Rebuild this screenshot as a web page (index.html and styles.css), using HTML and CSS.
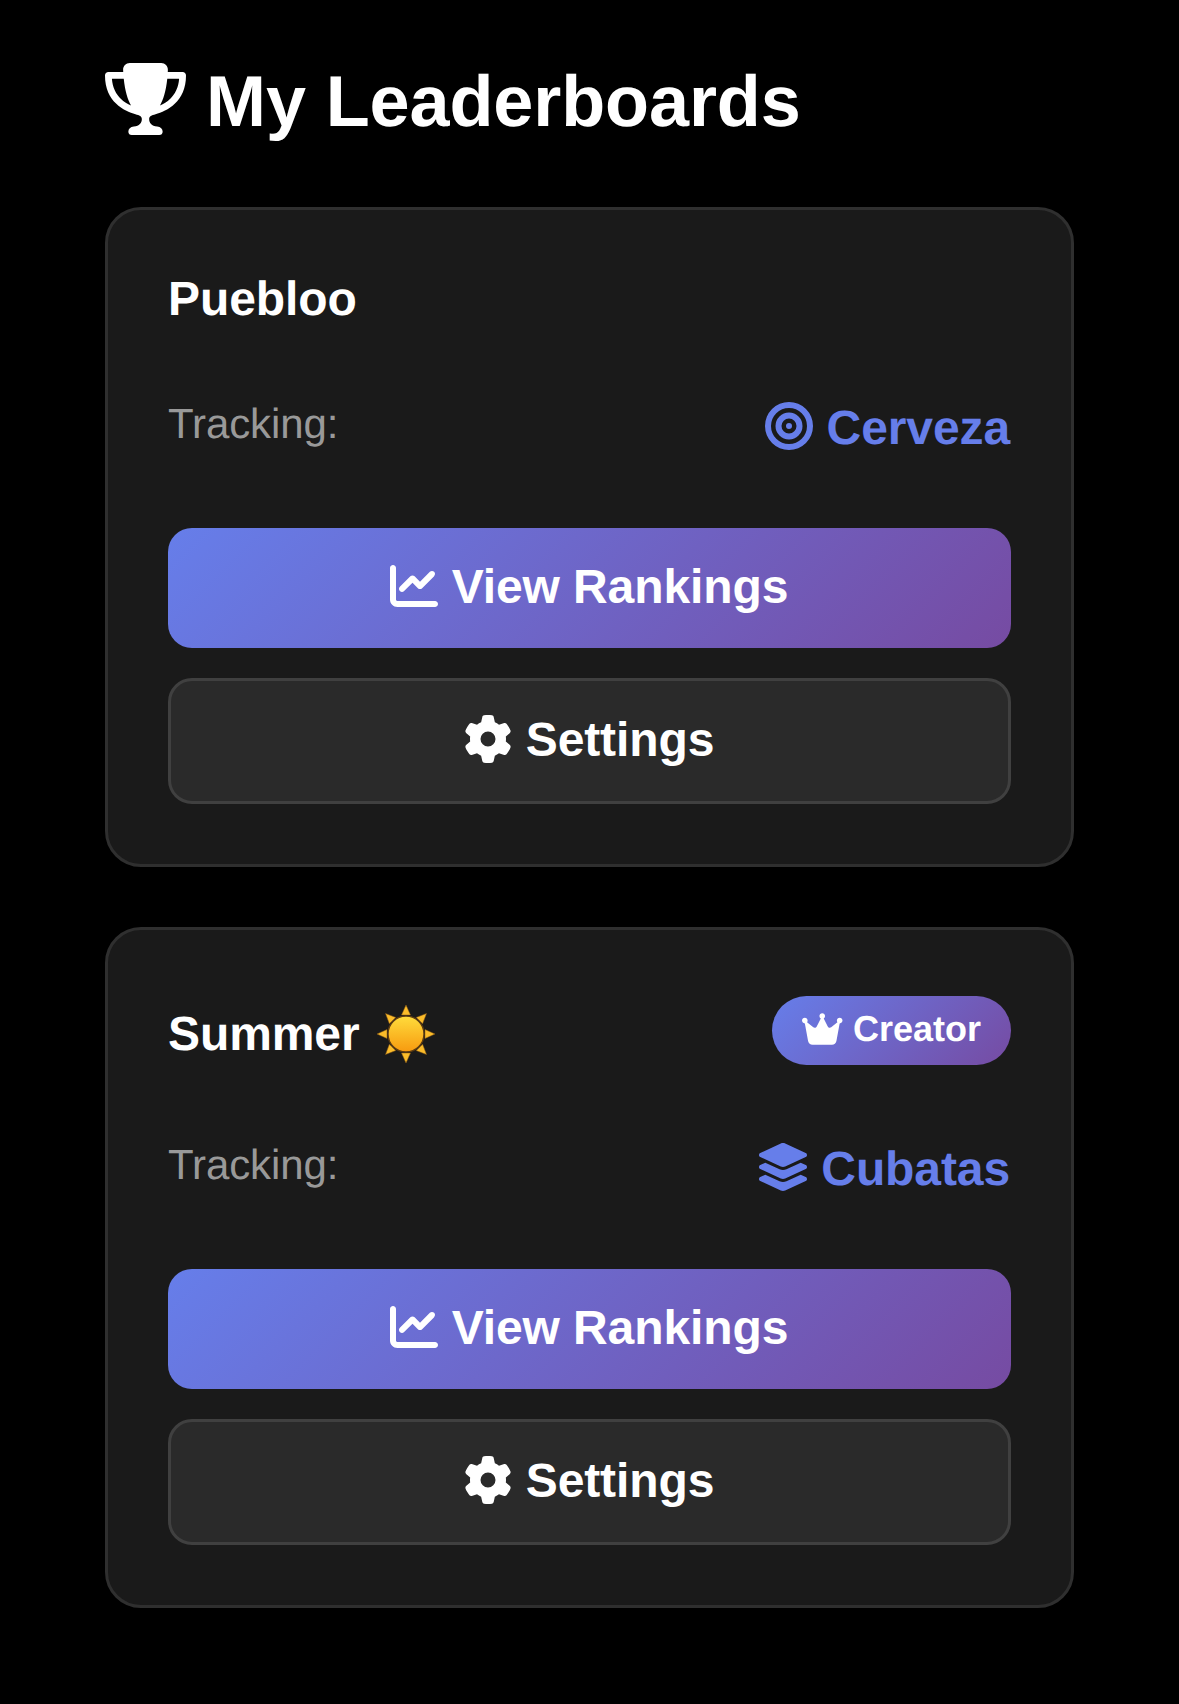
FILE: index.html
```html
<!DOCTYPE html>
<html lang="en">
<head>
    <meta charset="UTF-8">
    <meta name="viewport" content="width=device-width, initial-scale=1.0">
    <title>My Leaderboards</title>
    <link rel="stylesheet" href="styles.css">
</head>
<body>
    <h1 class="page-title">
        <svg class="trophy-icon" viewBox="0 0 576 512"><path d="M400 0H176c-26.5 0-48.1 21.8-47.1 48.2c.2 5.3 .4 10.6 .7 15.8H24C10.7 64 0 74.7 0 88c0 92.6 33.5 157 78.5 200.7c44.3 43.1 98.3 64.8 138.1 75.8C245 372 262 378 262 398C262 425 245 448 205 452C180 455 166 470 166 488C166 502 176 512 190 512H386C400 512 410 502 410 488C410 470 396 455 371 452C331 448 314 425 314 398C314 378 331 372 359.4 364.5c39.9-11 93.9-32.7 138.2-75.8C542.5 245 576 180.6 576 88c0-13.3-10.7-24-24-24H446.4c.3-5.2 .5-10.4 .7-15.8C448.1 21.8 426.5 0 400 0zM48.9 112h84.4c9.1 90.1 29.2 150.3 51.9 190.6c-24.9-11-50.8-26.5-73.2-48.3c-32-31.1-58-76-63-142.3zM464.1 254.3c-22.4 21.8-48.3 37.3-73.2 48.3c22.7-40.3 42.8-100.5 51.9-190.6h84.4c-5.1 66.3-31.1 111.2-63 142.3z"/></svg>
        <span>My Leaderboards</span>
    </h1>

    <div class="card">
        <div class="card-header">
            <h2 class="card-title">Puebloo</h2>
        </div>
        <div class="tracking-row">
            <span class="tracking-label">Tracking:</span>
            <span class="tracking-value">
                <svg class="icon" viewBox="0 0 512 512"><path d="M448 256A192 192 0 1 0 64 256a192 192 0 1 0 384 0zM0 256a256 256 0 1 1 512 0A256 256 0 1 1 0 256zm256 80a80 80 0 1 0 0-160 80 80 0 1 0 0 160zm0-224a144 144 0 1 1 0 288 144 144 0 1 1 0-288zM224 256a32 32 0 1 1 64 0 32 32 0 1 1 -64 0z"/></svg>
                Cerveza
            </span>
        </div>
        <div class="actions">
            <button class="btn btn-primary">
                <svg class="icon" viewBox="0 0 512 512"><path d="M64 64c0-17.7-14.3-32-32-32S0 46.3 0 64V400c0 44.2 35.8 80 80 80H480c17.7 0 32-14.3 32-32s-14.3-32-32-32H80c-8.8 0-16-7.2-16-16V64zm406.6 86.6c12.5-12.5 12.5-32.8 0-45.3s-32.8-12.5-45.3 0L320 210.7l-57.4-57.4c-12.5-12.5-32.8-12.5-45.3 0l-112 112c-12.5 12.5-12.5 32.8 0 45.3s32.8 12.5 45.3 0L240 221.3l57.4 57.4c12.5 12.5 32.8 12.5 45.3 0l128-128z"/></svg>
                View Rankings
            </button>
            <button class="btn btn-secondary">
                <svg class="icon" viewBox="0 0 512 512"><path d="M495.9 166.6c3.2 8.7 .5 18.4-6.4 24.6l-43.3 39.4c1.1 8.3 1.7 16.8 1.7 25.4s-.6 17.1-1.7 25.4l43.3 39.4c6.9 6.2 9.6 15.9 6.4 24.6c-4.4 11.9-9.7 23.3-15.8 34.3l-4.7 8.1c-6.6 11-14 21.4-22.1 31.2c-5.9 7.2-15.7 9.6-24.5 6.8l-55.7-17.7c-13.4 10.3-28.2 18.9-44 25.4l-12.5 57.1c-2 9.1-9 16.3-18.2 17.8c-13.8 2.3-28 3.5-42.5 3.5s-28.7-1.2-42.5-3.5c-9.2-1.5-16.2-8.7-18.2-17.8l-12.5-57.1c-15.8-6.5-30.6-15.1-44-25.4L83.1 425.9c-8.8 2.8-18.6 .3-24.5-6.8c-8.1-9.8-15.5-20.2-22.1-31.2l-4.7-8.1c-6.1-11-11.4-22.4-15.8-34.3c-3.2-8.7-.5-18.4 6.4-24.6l43.3-39.4C64.6 273.1 64 264.6 64 256s.6-17.1 1.7-25.4L22.4 191.2c-6.9-6.2-9.6-15.9-6.4-24.6c4.4-11.9 9.7-23.3 15.8-34.3l4.7-8.1c6.6-11 14-21.4 22.1-31.2c5.9-7.2 15.7-9.6 24.5-6.8l55.7 17.7c13.4-10.3 28.2-18.9 44-25.4l12.5-57.1c2-9.1 9-16.3 18.2-17.8C227.3 1.2 241.5 0 256 0s28.7 1.2 42.5 3.5c9.2 1.5 16.2 8.7 18.2 17.8l12.5 57.1c15.8 6.5 30.6 15.1 44 25.4l55.7-17.7c8.8-2.8 18.6-.3 24.5 6.8c8.1 9.8 15.5 20.2 22.1 31.2l4.7 8.1c6.1 11 11.4 22.4 15.8 34.3zM256 336a80 80 0 1 0 0-160 80 80 0 1 0 0 160z"/></svg>
                Settings
            </button>
        </div>
    </div>

    <div class="card">
        <div class="card-header card-header-creator">
            <h2 class="card-title">Summer
                <svg class="sun-icon" viewBox="0 0 58 58">
                    <defs>
                        <linearGradient id="sunFill" x1="0" y1="0" x2="0" y2="1">
                            <stop offset="0" stop-color="#ffdc3c"/>
                            <stop offset="1" stop-color="#f79a0f"/>
                        </linearGradient>
                    </defs>
                    <g fill="#fbbc2a" stroke="#8a5a14" stroke-width="0.5">
                        <polygon points="29,0 33.5,10 24.5,10"/>
                        <polygon points="29,0 33.5,10 24.5,10" transform="rotate(45 29 29)"/>
                        <polygon points="29,0 33.5,10 24.5,10" transform="rotate(90 29 29)"/>
                        <polygon points="29,0 33.5,10 24.5,10" transform="rotate(135 29 29)"/>
                        <polygon points="29,0 33.5,10 24.5,10" transform="rotate(180 29 29)"/>
                        <polygon points="29,0 33.5,10 24.5,10" transform="rotate(225 29 29)"/>
                        <polygon points="29,0 33.5,10 24.5,10" transform="rotate(270 29 29)"/>
                        <polygon points="29,0 33.5,10 24.5,10" transform="rotate(315 29 29)"/>
                    </g>
                    <circle cx="29" cy="29" r="18" fill="url(#sunFill)" stroke="#5b3b12" stroke-width="1.4"/>
                </svg>
            </h2>
            <span class="badge">
                <svg class="badge-icon" viewBox="0 0 576 512"><path d="M309 106c11.4-7 19-19.7 19-34c0-22.1-17.9-40-40-40s-40 17.9-40 40c0 14.4 7.6 27 19 34L209.7 220.6c-9.1 18.2-32.7 23.4-48.6 10.7L72 160c5-6.7 8-15 8-24c0-22.1-17.9-40-40-40S0 113.9 0 136s17.9 40 40 40c.2 0 .5 0 .7 0L86.4 427.4c5.5 30.4 32 52.6 63 52.6H426.6c30.9 0 57.4-22.1 63-52.6L535.3 176c.2 0 .5 0 .7 0c22.1 0 40-17.9 40-40s-17.9-40-40-40s-40 17.9-40 40c0 9 3 17.3 8 24l-89.1 71.3c-15.9 12.7-39.5 7.5-48.6-10.7L309 106z"/></svg>
                Creator
            </span>
        </div>
        <div class="tracking-row">
            <span class="tracking-label">Tracking:</span>
            <span class="tracking-value">
                <svg class="icon" viewBox="32 0 512 512"><path d="M264.5 5.2c14.9-6.9 32.1-6.9 47 0l218.6 101c8.5 3.9 13.9 12.4 13.9 21.8s-5.4 17.9-13.9 21.8l-218.6 101c-14.9 6.9-32.1 6.9-47 0L45.9 149.8C37.4 145.8 32 137.3 32 128s5.4-17.9 13.9-21.8L264.5 5.2zM476.9 209.6l53.2 24.6c8.5 3.9 13.9 12.4 13.9 21.8s-5.4 17.9-13.9 21.8l-218.6 101c-14.9 6.9-32.1 6.9-47 0L45.9 277.8C37.4 273.8 32 265.3 32 256s5.4-17.9 13.9-21.8l53.2-24.6 152 70.2c23.4 10.8 50.4 10.8 73.8 0l152-70.2zm-152 198.2l152-70.2 53.2 24.6c8.5 3.9 13.9 12.4 13.9 21.8s-5.4 17.9-13.9 21.8l-218.6 101c-14.9 6.9-32.1 6.9-47 0L45.9 405.8C37.4 401.8 32 393.3 32 384s5.4-17.9 13.9-21.8l53.2-24.6 152 70.2c23.4 10.8 50.4 10.8 73.8 0z"/></svg>
                Cubatas
            </span>
        </div>
        <div class="actions">
            <button class="btn btn-primary">
                <svg class="icon" viewBox="0 0 512 512"><path d="M64 64c0-17.7-14.3-32-32-32S0 46.3 0 64V400c0 44.2 35.8 80 80 80H480c17.7 0 32-14.3 32-32s-14.3-32-32-32H80c-8.8 0-16-7.2-16-16V64zm406.6 86.6c12.5-12.5 12.5-32.8 0-45.3s-32.8-12.5-45.3 0L320 210.7l-57.4-57.4c-12.5-12.5-32.8-12.5-45.3 0l-112 112c-12.5 12.5-12.5 32.8 0 45.3s32.8 12.5 45.3 0L240 221.3l57.4 57.4c12.5 12.5 32.8 12.5 45.3 0l128-128z"/></svg>
                View Rankings
            </button>
            <button class="btn btn-secondary">
                <svg class="icon" viewBox="0 0 512 512"><path d="M495.9 166.6c3.2 8.7 .5 18.4-6.4 24.6l-43.3 39.4c1.1 8.3 1.7 16.8 1.7 25.4s-.6 17.1-1.7 25.4l43.3 39.4c6.9 6.2 9.6 15.9 6.4 24.6c-4.4 11.9-9.7 23.3-15.8 34.3l-4.7 8.1c-6.6 11-14 21.4-22.1 31.2c-5.9 7.2-15.7 9.6-24.5 6.8l-55.7-17.7c-13.4 10.3-28.2 18.9-44 25.4l-12.5 57.1c-2 9.1-9 16.3-18.2 17.8c-13.8 2.3-28 3.5-42.5 3.5s-28.7-1.2-42.5-3.5c-9.2-1.5-16.2-8.7-18.2-17.8l-12.5-57.1c-15.8-6.5-30.6-15.1-44-25.4L83.1 425.9c-8.8 2.8-18.6 .3-24.5-6.8c-8.1-9.8-15.5-20.2-22.1-31.2l-4.7-8.1c-6.1-11-11.4-22.4-15.8-34.3c-3.2-8.7-.5-18.4 6.4-24.6l43.3-39.4C64.6 273.1 64 264.6 64 256s.6-17.1 1.7-25.4L22.4 191.2c-6.9-6.2-9.6-15.9-6.4-24.6c4.4-11.9 9.7-23.3 15.8-34.3l4.7-8.1c6.6-11 14-21.4 22.1-31.2c5.9-7.2 15.7-9.6 24.5-6.8l55.7 17.7c13.4-10.3 28.2-18.9 44-25.4l12.5-57.1c2-9.1 9-16.3 18.2-17.8C227.3 1.2 241.5 0 256 0s28.7 1.2 42.5 3.5c9.2 1.5 16.2 8.7 18.2 17.8l12.5 57.1c15.8 6.5 30.6 15.1 44 25.4l55.7-17.7c8.8-2.8 18.6-.3 24.5 6.8c8.1 9.8 15.5 20.2 22.1 31.2l4.7 8.1c6.1 11 11.4 22.4 15.8 34.3zM256 336a80 80 0 1 0 0-160 80 80 0 1 0 0 160z"/></svg>
                Settings
            </button>
        </div>
    </div>
</body>
</html>
```

FILE: styles.css
```css
body {
    font-family: "Liberation Sans", Arial, sans-serif;
    text-rendering: geometricPrecision;
    letter-spacing: -0.1px;
    margin: 0;
    padding: 60px 105px 97px;
    background-color: #000;
    color: #fff;
}

.page-title {
    display: flex;
    align-items: center;
    gap: 20px;
    margin: 0 0 62px;
    font-size: 72px;
    font-weight: 700;
    line-height: 85px;
}

.trophy-icon {
    width: 81px;
    height: 72px;
    margin-bottom: 7px;
    fill: #fff;
}

.card {
    margin-bottom: 60px;
    padding: 60px;
    background-color: #1a1a1a;
    border: 3px solid #2f2f2f;
    border-radius: 36px;
}

.card:last-child {
    margin-bottom: 0;
}

.card-header {
    display: flex;
    justify-content: space-between;
    align-items: flex-start;
    height: 55px;
}

.card-header-creator {
    align-items: flex-end;
    height: 76px;
}

.card-title {
    margin: 0;
    font-size: 48px;
    font-weight: 700;
    line-height: 59px;
}

.card-header-creator .card-title {
    margin-bottom: 2px;
}

.sun-icon {
    width: 58px;
    height: 58px;
    margin-left: 4px;
    vertical-align: -13px;
}

.badge {
    display: flex;
    align-items: center;
    gap: 10px;
    height: 69px;
    margin-bottom: 1px;
    padding: 0 30px 3px;
    box-sizing: border-box;
    font-size: 36px;
    font-weight: 700;
    letter-spacing: 0;
    border-radius: 45px;
    background: linear-gradient(135deg, #667eea 0%, #764ba2 100%);
}

.badge-icon {
    width: 40.5px;
    height: 36px;
    fill: #fff;
}

.tracking-row {
    display: flex;
    justify-content: space-between;
    align-items: flex-start;
    margin: 73px 0 75px;
    height: 55px;
}

.tracking-label {
    font-size: 42px;
    line-height: 51px;
    color: #999;
}

.tracking-value {
    display: flex;
    align-items: center;
    gap: 14px;
    height: 55px;
    margin-top: 3px;
    padding-right: 1px;
    font-size: 48px;
    font-weight: 700;
    line-height: 59px;
    color: #667eea;
}

.icon {
    width: 48px;
    height: 48px;
    fill: currentColor;
}

.tracking-value .icon {
    margin-bottom: 6px;
}

.btn .icon {
    margin-bottom: 2px;
}

.actions {
    display: flex;
    flex-direction: column;
    gap: 30px;
}

.btn {
    display: flex;
    justify-content: center;
    align-items: center;
    gap: 14px;
    width: 100%;
    padding: 0 1px 3px 0;
    box-sizing: border-box;
    font-family: inherit;
    font-size: 48px;
    font-weight: 700;
    letter-spacing: inherit;
    color: #fff;
    border-radius: 24px;
    cursor: pointer;
}

.btn-primary {
    height: 120px;
    border: none;
    background: linear-gradient(135deg, #667eea 0%, #764ba2 100%);
}

.btn-secondary {
    height: 126px;
    background-color: #2a2a2a;
    border: 3px solid #404040;
}
```
